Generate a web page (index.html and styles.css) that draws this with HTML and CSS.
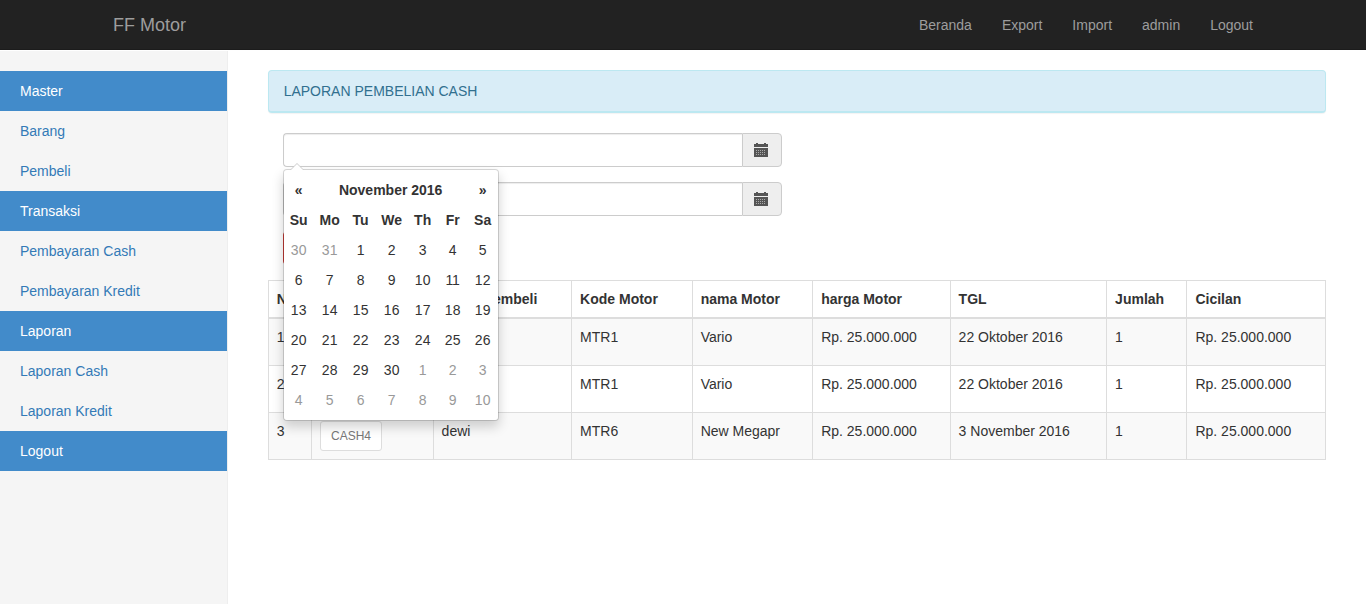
FILE: index.html
```html
<!DOCTYPE html>
<html lang="id">
<head>
<meta charset="utf-8">
<meta name="viewport" content="width=device-width, initial-scale=1">
<title>FF Motor</title>
<link rel="stylesheet" href="styles.css">
</head>
<body>
<svg class="sprite" aria-hidden="true">
  <symbol id="icon-calendar" viewBox="0 0 14 14">
    <path d="M0 1h2V0h2v1h6V0h2v1h2v3H0zM0 5h14v9H0z"/>
    <g class="icon-dots">
      <path d="M2 7.5h10M2 9.5h10M2 11.5h10" stroke-dasharray="1 1"/>
    </g>
  </symbol>
</svg>
<header class="navbar">
  <div class="container">
    <a class="brand" href="#">FF Motor</a>
    <nav class="top-nav">
      <a href="#">Beranda</a>
      <a href="#">Export</a>
      <a href="#">Import</a>
      <a href="#">admin</a>
      <a href="#">Logout</a>
    </nav>
  </div>
</header>
<div class="layout">
  <nav class="sidebar">
    <a class="active" href="#">Master</a>
    <a href="#">Barang</a>
    <a href="#">Pembeli</a>
    <a class="active" href="#">Transaksi</a>
    <a href="#">Pembayaran Cash</a>
    <a href="#">Pembayaran Kredit</a>
    <a class="active" href="#">Laporan</a>
    <a href="#">Laporan Cash</a>
    <a href="#">Laporan Kredit</a>
    <a class="active" href="#">Logout</a>
  </nav>
  <main class="main">
    <div class="panel">LAPORAN PEMBELIAN CASH</div>
    <form class="filter">
      <div class="field">
        <input type="text" aria-label="Tanggal awal">
        <button class="addon" type="button" aria-label="Pilih tanggal awal"><svg class="icon"><use href="#icon-calendar"/></svg></button>
        <div class="datepicker">
          <table>
            <colgroup><col class="day"><col class="day-wide"><col class="day"><col class="day-wide"><col class="day"><col class="day"><col class="day"></colgroup>
            <thead>
              <tr><th class="step">«</th><th colspan="5">November 2016</th><th class="step">»</th></tr>
              <tr><th>Su</th><th>Mo</th><th>Tu</th><th>We</th><th>Th</th><th>Fr</th><th>Sa</th></tr>
            </thead>
            <tbody>
              <tr><td class="other">30</td><td class="other">31</td><td>1</td><td>2</td><td>3</td><td>4</td><td>5</td></tr>
              <tr><td>6</td><td>7</td><td>8</td><td>9</td><td>10</td><td>11</td><td>12</td></tr>
              <tr><td>13</td><td>14</td><td>15</td><td>16</td><td>17</td><td>18</td><td>19</td></tr>
              <tr><td>20</td><td>21</td><td>22</td><td>23</td><td>24</td><td>25</td><td>26</td></tr>
              <tr><td>27</td><td>28</td><td>29</td><td>30</td><td class="other">1</td><td class="other">2</td><td class="other">3</td></tr>
              <tr><td class="other">4</td><td class="other">5</td><td class="other">6</td><td class="other">7</td><td class="other">8</td><td class="other">9</td><td class="other">10</td></tr>
            </tbody>
          </table>
        </div>
      </div>
      <div class="field">
        <input type="text" aria-label="Tanggal akhir">
        <button class="addon" type="button" aria-label="Pilih tanggal akhir"><svg class="icon"><use href="#icon-calendar"/></svg></button>
      </div>
      <button class="btn-danger" type="submit" aria-label="Cari"></button>
    </form>
    <table class="report">
      <colgroup><col class="c-no"><col class="c-code"><col class="c-buyer"><col class="c-motor"><col class="c-name"><col class="c-price"><col class="c-date"><col class="c-count"><col class="c-total"></colgroup>
      <thead>
        <tr><th>No</th><th></th><th>Nama Pembeli</th><th>Kode Motor</th><th>nama Motor</th><th>harga Motor</th><th>TGL</th><th>Jumlah</th><th>Cicilan</th></tr>
      </thead>
      <tbody>
        <tr><td>1</td><td></td><td></td><td>MTR1</td><td>Vario</td><td>Rp. 25.000.000</td><td>22 Oktober 2016</td><td>1</td><td>Rp. 25.000.000</td></tr>
        <tr><td>2</td><td></td><td></td><td>MTR1</td><td>Vario</td><td>Rp. 25.000.000</td><td>22 Oktober 2016</td><td>1</td><td>Rp. 25.000.000</td></tr>
        <tr><td>3</td><td><button class="code" type="button">CASH4</button></td><td>dewi</td><td>MTR6</td><td>New Megapr</td><td>Rp. 25.000.000</td><td>3 November 2016</td><td>1</td><td>Rp. 25.000.000</td></tr>
      </tbody>
    </table>
  </main>
</div>
</body>
</html>
```
FILE: styles.css
```css
* { box-sizing: border-box; }

body {
  margin: 0;
  min-height: 100vh;
  display: flex;
  flex-direction: column;
  font: 14px/20px "Liberation Sans", Arial, sans-serif;
  color: #333;
  background: #fff;
}

a { color: #337ab7; text-decoration: none; }
button, input { font: inherit; }
table { border-collapse: collapse; }

.sprite { position: absolute; width: 0; height: 0; }

.navbar {
  min-height: 50px;
  background: #222;
  border-bottom: 1px solid #1c1c1c;
}
.container {
  max-width: 1170px;
  margin: 0 auto;
  display: flex;
  justify-content: space-between;
}
.navbar a { padding: 15px 15px 14px; color: #9d9d9d; }
.navbar .brand { font-size: 18px; }
.top-nav { display: flex; }

.layout { flex: 1; display: flex; }

.sidebar {
  flex: 0 0 auto;
  width: 16.6667%;
  margin-top: 1px;
  padding: 20px 0;
  background: #f5f5f5;
  border-right: 1px solid #eee;
}
.sidebar a { display: block; padding: 10px 20px; }
.sidebar .active { color: #fff; background: #428bca; }

.main { flex: 1; min-width: 0; padding: 20px 40px; }

.panel {
  margin-bottom: 20px;
  padding: 10px 15px;
  color: #31708f;
  background: #d9edf7;
  border: 1px solid #bce8f1;
  border-bottom-width: 2px;
  border-radius: 4px;
  box-shadow: 0 1px 1px rgba(0, 0, 0, .05);
}

.filter {
  width: 50%;
  padding: 0 15px;
  margin-bottom: 15px;
  display: flex;
  flex-direction: column;
  align-items: flex-start;
  gap: 15px;
}
.field { position: relative; display: flex; width: 100%; }
.field input {
  flex: 1;
  min-width: 0;
  height: 34px;
  padding: 6px 12px;
  color: #555;
  background: #fff;
  border: 1px solid #ccc;
  border-right: 0;
  border-radius: 4px 0 0 4px;
  box-shadow: inset 0 1px 1px rgba(0, 0, 0, .075);
  outline: 0;
}
.addon {
  width: 40px;
  padding: 0 1px 0 0;
  display: flex;
  align-items: center;
  justify-content: center;
  background: #eee;
  border: 1px solid #ccc;
  border-radius: 0 4px 4px 0;
}
.icon { width: 14px; height: 14px; fill: #555; }
.icon-dots { stroke: #aaa; stroke-width: 1; }

.btn-danger {
  width: 54px;
  height: 34px;
  padding: 6px 12px;
  color: #fff;
  background: #d9534f;
  border: 1px solid #d43f3a;
  border-radius: 4px;
}

.datepicker {
  position: absolute;
  z-index: 10;
  top: 100%;
  left: 0;
  margin-top: 2px;
  padding: 5px 0;
  background: #fff;
  background-clip: padding-box;
  border: 1px solid rgba(0, 0, 0, .15);
  border-radius: 4px;
  box-shadow: 0 6px 12px rgba(0, 0, 0, .175);
}
.datepicker::before,
.datepicker::after {
  content: "";
  position: absolute;
  border: solid transparent;
  border-top: 0;
}
.datepicker::before {
  top: -7px;
  left: 6px;
  border-width: 0 7px 7px;
  border-bottom-color: #ccc;
}
.datepicker::after {
  top: -6px;
  left: 7px;
  border-width: 0 6px 6px;
  border-bottom-color: #fff;
}
.datepicker table { table-layout: fixed; width: 214px; }
.day { width: 30px; }
.day-wide { width: 32px; }
.datepicker th, .datepicker td { padding: 5px 0; text-align: center; }
.datepicker .other { color: #999; }

.report { width: 100%; table-layout: fixed; border: 1px solid #ddd; }
.c-no { width: 4.1%; }
.c-code { width: 11.5%; }
.c-buyer { width: 13.1%; }
.c-motor { width: 11.4%; }
.c-name { width: 11.4%; }
.c-price { width: 13%; }
.c-date { width: 14.8%; }
.c-count { width: 7.6%; }
.c-total { width: 13.1%; }
.report th, .report td {
  padding: 8px;
  text-align: left;
  vertical-align: top;
  border: 1px solid #ddd;
}
.report th { border-bottom-width: 2px; }
.report td { height: 47px; }
.report tbody tr:nth-child(odd) { background: #f9f9f9; }
.code {
  display: block;
  height: 30px;
  padding: 5px 10px;
  font-size: 12px;
  line-height: 18px;
  color: #777;
  background: #fff;
  border: 1px solid #ddd;
  border-radius: 3px;
}
```
